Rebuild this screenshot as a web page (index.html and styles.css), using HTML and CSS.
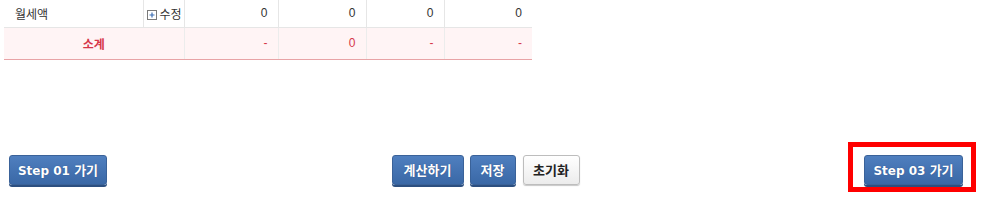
FILE: index.html
```html
<!DOCTYPE html>
<html lang="ko">
<head>
<meta charset="utf-8">
<link rel="stylesheet" href="styles.css">
</head>
<body>
<div class="page">
  <table class="grid">
    <colgroup>
      <col class="c1"><col class="c2"><col class="c3"><col class="c4"><col class="c5"><col class="c6">
    </colgroup>
    <tr class="row">
      <td class="label">월세액</td>
      <td class="edit"><svg class="plus" width="10" height="10" viewBox="0 0 10 10"><rect x="0.5" y="0.5" width="9" height="9" fill="#fff" stroke="#7a7a7a"/><path d="M5 2.5v5M2.5 5h5" stroke="#3d6fb3" stroke-width="1.2"/></svg><span>수정</span></td>
      <td class="num">0</td>
      <td class="num">0</td>
      <td class="num">0</td>
      <td class="num last">0</td>
    </tr>
    <tr class="sum">
      <td class="sumlabel" colspan="2">소계</td>
      <td class="num">-</td>
      <td class="num">0</td>
      <td class="num">-</td>
      <td class="num last">-</td>
    </tr>
  </table>
  <div class="actions">
    <button class="btn blue step1">Step 01 <span class="ko">가기</span></button>
    <div class="mid">
      <button class="btn blue calc"><span class="ko">계산하기</span></button>
      <button class="btn blue save"><span class="ko">저장</span></button>
      <button class="btn white reset"><span class="ko">초기화</span></button>
    </div>
    <div class="rightwrap">
      <button class="btn blue step3">Step 03 <span class="ko">가기</span></button>
      <div class="highlight"></div>
    </div>
  </div>
</div>
</body>
</html>
```
FILE: styles.css
```css
* { box-sizing: border-box; }
html, body { margin: 0; padding: 0; background: #fff; }
body {
  font-family: "Liberation Sans", "Noto Sans CJK KR", sans-serif;
  font-size: 12px;
  color: #333;
}
.page { width: 993px; height: 200px; overflow: hidden; }
.grid {
  margin-left: 4px;
  width: 528px;
  border-collapse: collapse;
  table-layout: fixed;
}
.c1 { width: 139px; }
.c2 { width: 41px; }
.c3 { width: 94px; }
.c4 { width: 88px; }
.c5 { width: 78px; }
.c6 { width: 88px; }
.grid td { padding: 0; }
.row td {
  height: 27px;
  border-bottom: 1px solid #e6e6e6;
  border-right: 1px solid #e6e6e6;
  vertical-align: middle;
}
.row td.last, .sum td.last { border-right: none; }
.label { padding-left: 11px !important; }
.edit { white-space: nowrap; padding-left: 3px !important; font-size: 12px; }
.edit .plus { vertical-align: -1px; margin-right: 3px; }
.num { text-align: right; padding-right: 10px !important; }
.sum td {
  height: 32px;
  background: #fff4f5;
  color: #d6374a;
  border-bottom: 1px solid #e8a3a6;
  border-right: 1px solid #ececec;
}
.sumlabel { text-align: center; font-weight: bold; padding-left: 0; }
.actions {
  display: flex;
  justify-content: space-between;
  align-items: flex-start;
  padding: 0 30px 0 9px;
  margin-top: 95px;
}
.mid { display: flex; gap: 6px; }
.mid .reset { margin-left: 1px; }
.btn {
  height: 30px;
  font-family: "DejaVu Sans", "Noto Sans CJK KR", sans-serif;
  font-size: 12px;
  font-weight: bold;
  border-radius: 3px;
  padding: 0;
  cursor: pointer;
}
.btn .ko { font-size: 13px; }
.blue {
  color: #fff;
  background: linear-gradient(#4f7fbf, #3a68a6);
  border: 1px solid #3a6299;
  box-shadow: 0 2px 0 #2c4f80;
  text-shadow: 0 0 1px #2a4d80;
}
.white {
  color: #222;
  background: linear-gradient(#ffffff, #ececec);
  border: 1px solid #bdbdbd;
  box-shadow: 0 1px 1px #c8c8c8;
}
.step1 { width: 98px; }
.step3 { width: 99px; }
.calc { width: 72px; }
.save { width: 46px; }
.reset { width: 57px; }
.rightwrap { position: relative; }
.highlight {
  position: absolute;
  left: -16px;
  top: -13px;
  width: 128px;
  height: 50px;
  border: 5px solid #ff0000;
}
```
